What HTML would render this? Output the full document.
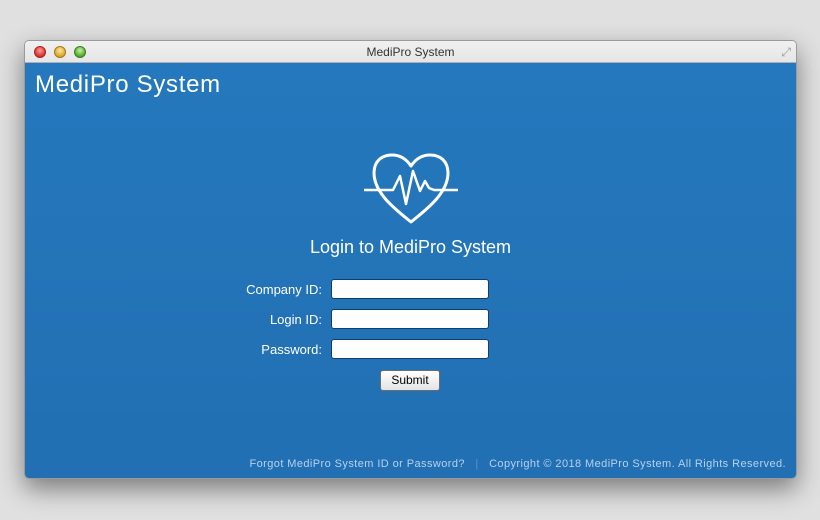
<!DOCTYPE html>
<html><head><meta charset="utf-8"><style>
body{margin:0;width:820px;height:520px;background:#e0e0e0;font-family:"Liberation Sans",sans-serif;position:relative;overflow:hidden}
.win{position:absolute;left:24px;top:40px;width:773px;height:439px;border-radius:5px;overflow:hidden;box-shadow:0 10px 25px rgba(0,0,0,.45);border:1px solid #9a9a9a;box-sizing:border-box}
.tb{height:22px;background:linear-gradient(#f0f0f0,#e6e6e6);border-bottom:1px solid #b0b0b0;box-sizing:border-box;text-align:center;font-size:12px;line-height:22px;color:#333}
.dot{position:absolute;top:5px;width:12px;height:12px;border-radius:50%}
.main{position:absolute;top:22px;left:0;right:0;bottom:0;background:linear-gradient(#2578bd,#226fb3)}
.h1{position:absolute;left:10px;top:8px;color:#fff;font-size:24px;letter-spacing:.7px}
.title{position:absolute;left:0;right:0;top:174px;text-align:center;color:#fff;font-size:18px}
.lbl{position:absolute;right:474px;color:#fff;font-size:13px;text-align:right}
.inp{position:absolute;left:306px;width:158px;height:20px;background:#fff;border:1px solid #0e3f6e;border-radius:3px;box-sizing:border-box}
.btn{position:absolute;left:355px;top:307px;width:60px;height:21px;border:1px solid #6d6d6d;border-radius:3px;background:linear-gradient(#fff,#e4e4e4);box-sizing:border-box;font-size:12px;text-align:center;line-height:19px;color:#000}
.ft{position:absolute;right:10px;top:395px;font-size:11px;color:#b4d2ef;letter-spacing:.42px}
</style></head><body>
<div class="win">
<div class="tb">MediPro System</div>
<div class="dot" style="left:9px;background:radial-gradient(circle at 50% 35%,#ff9a95,#d8322c 70%);border:1px solid #a02420;box-sizing:border-box"></div>
<div class="dot" style="left:29px;background:radial-gradient(circle at 50% 35%,#ffe9a0,#d9a524 70%);border:1px solid #a07a18;box-sizing:border-box"></div>
<div class="dot" style="left:49px;background:radial-gradient(circle at 50% 35%,#c6f2a0,#4fa72c 70%);border:1px solid #3a7d20;box-sizing:border-box"></div>
<div style="position:absolute;right:5px;top:4px;color:#999;font-size:12px">⤢</div>
<div class="main">
<div class="h1">MediPro System</div>
<svg style="position:absolute;left:0;top:0" width="773" height="417">
<g fill="none" stroke="#fff" stroke-width="3" stroke-linejoin="round">
<path d="M386 159 C370 146 349 130 349 110 C349 98 357 92 367 92 C376 92 382 97 386 103 C390 97 396 92 405 92 C415 92 423 98 423 110 C423 130 402 146 386 159 Z"/>
<path d="M339 127 L368 127 L375 113 L381 141 L388 108 L395 128 L400 118 L404 125 L409 127 L433 127" stroke-width="2.5"/>
</g></svg>
<div class="title">Login to MediPro System</div>
<div class="lbl" style="top:219px">Company ID:</div>
<div class="lbl" style="top:249px">Login ID:</div>
<div class="lbl" style="top:279px">Password:</div>
<div class="inp" style="top:216px"></div>
<div class="inp" style="top:246px"></div>
<div class="inp" style="top:276px"></div>
<div class="btn">Submit</div>
<div class="ft">Forgot MediPro System ID or Password? &nbsp; <span style="color:#5b93c6">|</span> &nbsp; Copyright © 2018 MediPro System. All Rights Reserved.</div>
</div></div>
</body></html>
